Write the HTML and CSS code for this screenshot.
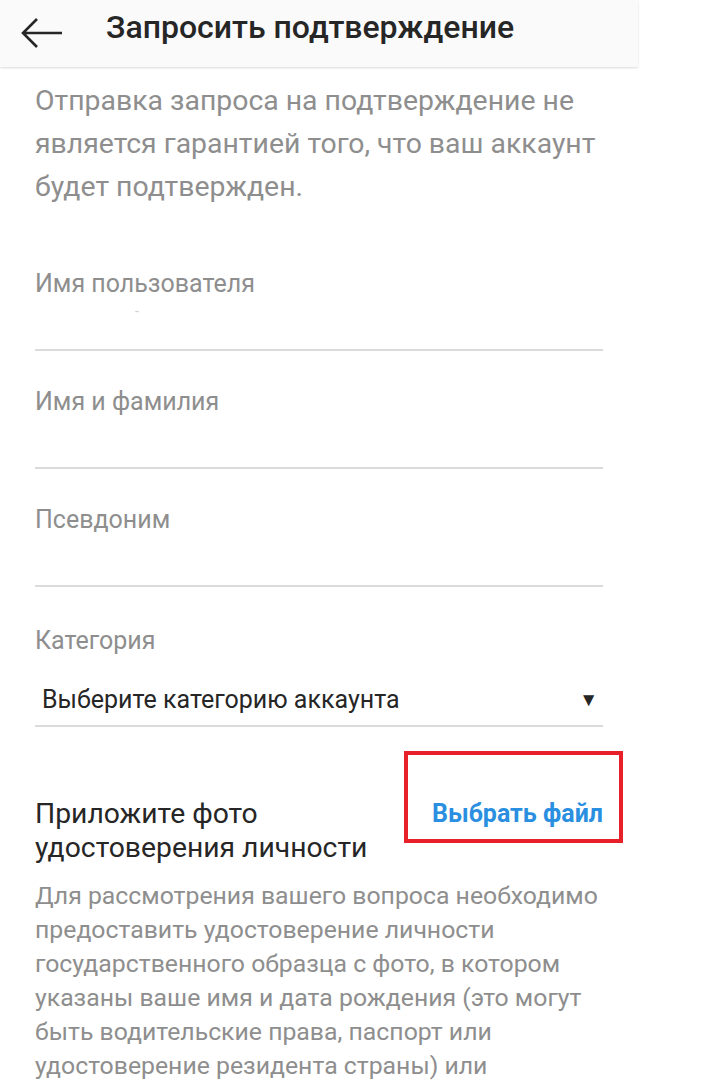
FILE: index.html
```html
<!DOCTYPE html>
<html lang="ru">
<head>
    <meta charset="UTF-8">
    <title>Запросить подтверждение</title>
    <link rel="stylesheet" href="styles.css">
</head>
<body>
    <div class="screen">
        <header class="topbar">
            <svg class="back" width="44" height="30" viewBox="0 0 44 30">
                <path d="M42 15H3M17 1L3 15l14 14" fill="none" stroke="#262626" stroke-width="2.6"/>
            </svg>
            <h1>Запросить подтверждение</h1>
        </header>

        <main class="content">
            <p class="intro">Отправка запроса на подтверждение не является гарантией того, что ваш аккаунт будет подтвержден.</p>

            <div class="field">
                <div class="label">Имя пользователя</div>
                <div class="input"><span class="hidden-value">-</span></div>
            </div>
            <div class="field">
                <div class="label">Имя и фамилия</div>
                <div class="input"></div>
            </div>
            <div class="field">
                <div class="label">Псевдоним</div>
                <div class="input"></div>
            </div>
            <div class="field field-category">
                <div class="label">Категория</div>
                <div class="select">
                    <span>Выберите категорию аккаунта</span>
                    <span class="caret">▼</span>
                </div>
            </div>

            <div class="attach">
                <div class="attach-title">Приложите фото удостоверения личности</div>
                <a class="pick-file">Выбрать файл</a>
            </div>
            <p class="note">Для рассмотрения вашего вопроса необходимо предоставить удостоверение личности государственного образца с фото, в котором указаны ваше имя и дата рождения (это могут быть водительские права, паспорт или удостоверение резидента страны) или официальный документ с фото.</p>
        </main>
    </div>
</body>
</html>
```

FILE: styles.css
```css
body {
    margin: 0;
    font-family: Roboto, "Noto Sans", sans-serif;
    background: #fff;
}
.screen {
    width: 638px;
}
.topbar {
    height: 67px;
    display: flex;
    align-items: center;
    padding-left: 20px;
    background: #fafafa;
    box-shadow: 0 1px 2px rgba(0,0,0,0.15);
}
.back {
    margin-top: -2px;
}
.topbar h1 {
    margin: -13px 0 0 42px;
    font-size: 32px;
    font-weight: 500;
    color: #262626;
}
.content {
    padding: 12px 35px 0;
}
.intro {
    margin: 0;
    font-size: 28.4px;
    line-height: 43px;
    color: #8e8e8e;
}
.field {
    margin-top: 36px;
}
.intro + .field {
    margin-top: 61px;
}
.field-category {
    margin-top: 39px;
}
.label {
    font-size: 25px;
    line-height: 30px;
    color: #8e8e8e;
}
.input {
    height: 50px;
    border-bottom: 2px solid #dbdbdb;
}
.hidden-value {
    display: inline-block;
    margin: 4px 0 0 100px;
    font-size: 14px;
    color: #d0d0d0;
}
.select {
    display: flex;
    justify-content: space-between;
    align-items: center;
    padding: 29px 7px 10px;
    font-size: 25px;
    line-height: 30px;
    color: #262626;
    border-bottom: 2px solid #dbdbdb;
}
.caret {
    font-size: 19px;
    margin-right: -2px;
}
.attach {
    display: flex;
    justify-content: space-between;
    align-items: flex-start;
    margin-top: 70px;
}
.attach-title {
    width: 340px;
    font-size: 28.3px;
    line-height: 34px;
    color: #262626;
}
.pick-file {
    position: relative;
    font-size: 25px;
    line-height: 34px;
    font-weight: 700;
    color: #2a8fe0;
}
/* annotation frame drawn over the button */
.pick-file::after {
    content: "";
    position: absolute;
    left: -28px;
    right: -20px;
    top: -46px;
    bottom: -12px;
    border: 4px solid #e8202a;
}
.note {
    margin: 14px 0 0;
    font-size: 24.8px;
    line-height: 34px;
    color: #8e8e8e;
}
```
